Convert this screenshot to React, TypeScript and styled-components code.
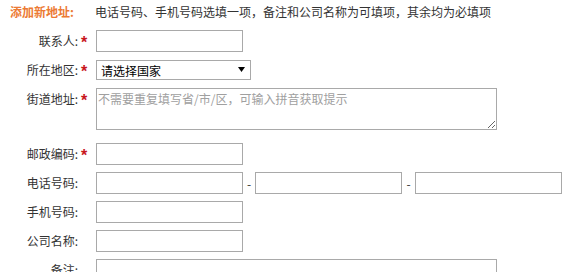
import React from "react";
import styled, { createGlobalStyle } from "styled-components";

const Global = createGlobalStyle`
  html, body { margin: 0; padding: 0; background: #fff; }
  body { font-family: "Noto Sans CJK SC", "Noto Sans", sans-serif; font-size: 12px; color: #333; }
  * { box-sizing: border-box; }
`;

const Page = styled.div`
  width: 564px;
  height: 272px;
  overflow: hidden;
`;

const Header = styled.div`
  display: flex;
  align-items: center;
  height: 22px;
  margin-bottom: 8px;
`;

const Title = styled.div`
  width: 95px;
  padding-left: 10px;
  color: #ec7a33;
  font-weight: bold;
  font-size: 12px;
`;

const Note = styled.div`
  color: #333;
  font-size: 12px;
`;

const Form = styled.div`
  display: grid;
  grid-template-columns: 78px 18px 1fr;
  row-gap: 7px;
  align-items: center;
`;

const Label = styled.div<{ $top?: boolean }>`
  text-align: right;
  color: #333;
  line-height: 22px;
  align-self: ${(p) => (p.$top ? "start" : "center")};
`;

const Star = styled.div<{ $top?: boolean }>`
  color: #c8161d;
  font-family: "Liberation Sans", Arial, sans-serif;
  font-size: 16px;
  font-weight: bold;
  line-height: 16px;
  height: 22px;
  padding: 5px 0 0 3px;
  align-self: ${(p) => (p.$top ? "start" : "center")};
`;

const Field = styled.div<{ $gapBelow?: number }>`
  display: flex;
  align-items: center;
  margin-bottom: ${(p) => p.$gapBelow ?? 0}px;
`;

const Input = styled.input`
  width: 147px;
  height: 22px;
  border: 1px solid #a9a9a9;
  padding: 0 3px;
  font: inherit;
  outline: none;
`;

const SelectWrap = styled.div`
  position: relative;
  width: 155px;
  height: 20px;
`;

const Select = styled.select`
  appearance: none;
  width: 100%;
  height: 100%;
  border: 1px solid #a9a9a9;
  border-radius: 0;
  background: #fff;
  padding: 0 0 0 4px;
  font: inherit;
  color: #000;
  outline: none;
`;

const Arrow = styled.svg`
  position: absolute;
  right: 6px;
  top: 7px;
  pointer-events: none;
`;

const Area = styled.textarea<{ $h: number }>`
  width: 401px;
  height: ${(p) => p.$h}px;
  border: 1px solid #a9a9a9;
  padding: 2px 1px;
  font: inherit;
  font-size: 12px;
  line-height: 16px;
  outline: none;
  resize: both;
  &::placeholder { color: #a0a0a0; }
`;

const Dash = styled.span`
  width: 12px;
  text-align: center;
  color: #333;
`;

const Dash2 = styled(Dash)`
  width: 13px;
`;

export default function App() {
  return (
    <Page>
      <Global />
      <Header>
        <Title>添加新地址:</Title>
        <Note>电话号码、手机号码选填一项，备注和公司名称为可填项，其余均为必填项</Note>
      </Header>
      <Form>
        <Label>联系人:</Label>
        <Star>*</Star>
        <Field>
          <Input />
        </Field>

        <Label>所在地区:</Label>
        <Star>*</Star>
        <Field>
          <SelectWrap>
            <Select defaultValue="">
              <option value="">请选择国家</option>
            </Select>
            <Arrow width="7" height="5" viewBox="0 0 7 5">
              <polygon points="0,0 7,0 3.5,5" fill="#000" />
            </Arrow>
          </SelectWrap>
        </Field>

        <Label $top>街道地址:</Label>
        <Star $top>*</Star>
        <Field $gapBelow={6}>
          <Area $h={42} placeholder="不需要重复填写省/市/区，可输入拼音获取提示" />
        </Field>

        <Label>邮政编码:</Label>
        <Star>*</Star>
        <Field>
          <Input />
        </Field>

        <Label>电话号码:</Label>
        <Star />
        <Field>
          <Input />
          <Dash>-</Dash>
          <Input />
          <Dash2>-</Dash2>
          <Input />
        </Field>

        <Label>手机号码:</Label>
        <Star />
        <Field>
          <Input />
        </Field>

        <Label>公司名称:</Label>
        <Star />
        <Field>
          <Input />
        </Field>

        <Label $top>备注:</Label>
        <Star $top />
        <Field>
          <Area $h={42} />
        </Field>
      </Form>
    </Page>
  );
}
